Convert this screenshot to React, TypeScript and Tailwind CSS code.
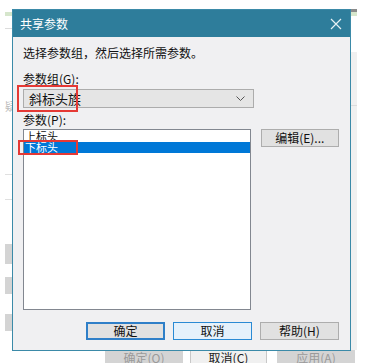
const font = { fontFamily: '"Noto Sans CJK SC", "Microsoft YaHei", sans-serif' };

// window that sits behind the dialog; only its edges show
function BackWindow() {
  return (
    <div className="absolute left-[5px] top-[9px] flex h-[370px] w-[352px] flex-col">
      <div className="ml-[7px] h-[3px] bg-[#8a8a8a]" />
      <div className="h-[4px] bg-[#d6e6cc]" />
      <div className="flex h-[334px] justify-between">
        <div className="flex w-[7px] flex-col">
          <div className="mt-[12px] h-px bg-[#dcdcdc]" />
          <div className="mt-[72px] text-[11px] leading-none text-[#bbb]">疑</div>
          <div className="mt-[62px] h-px bg-[#e0e0e0]" />
          <div className="mt-[24px] h-px bg-[#e0e0e0]" />
          <div className="mt-[44px] h-[20px] bg-[#d4d4d4]" />
          <div className="mt-[13px] h-[17px] bg-[#d4d4d4]" />
          <div className="mt-[20px] h-[17px] bg-[#d4d4d4]" />
        </div>
        <div className="mt-[36px] flex w-[7px] flex-col bg-[#f0f0f0]">
          <div className="mt-[53px] h-px bg-[#dcdcdc]" />
        </div>
      </div>
      <div className="flex items-start pl-[100px] text-[12px] leading-[16px]">
        <div className="flex h-[20px] w-[78px] justify-center bg-[#d4d4d4] text-[#9a9a9a]">确定(O)</div>
        <div className="ml-[7px] flex h-[20px] w-[77px] justify-center border-x border-[#c8c8c8] bg-[#f0f0f0] text-[#222]">取消(C)</div>
        <div className="ml-[10px] flex h-[20px] w-[78px] justify-center bg-[#d4d4d4] text-[#9a9a9a]">应用(A)</div>
      </div>
    </div>
  );
}

function Btn({ label, kind, className }: { label: string; kind?: "default" | "hover"; className?: string }) {
  const look =
    kind === "default"
      ? "border-2 border-[#2f7fc8] bg-[#e1e1e1]"
      : kind === "hover"
        ? "border border-[#2a8ad4] bg-[#e5f1fb]"
        : "border border-[#adadad] bg-[#e1e1e1]";
  return (
    <div className={`flex h-[18px] w-[79px] items-center justify-center text-[12px] leading-none text-[#111] ${look} ${className ?? ""}`}>
      {label}
    </div>
  );
}

export default function App() {
  return (
    <div className="relative h-[363px] w-[380px] overflow-hidden bg-white" style={font}>
      <BackWindow />

      <div className="absolute left-[12px] top-[9px] flex h-[342px] w-[339px] flex-col border border-[#3b8aa8] bg-[#f0f0f2]">
        <div className="flex h-[27px] shrink-0 items-center justify-between bg-[#2e7d9b] pl-[7px] pr-[7px] text-white">
          <span className="text-[12px] leading-none">共享参数</span>
          <svg width="12" height="12" viewBox="0 0 12 12" className="mr-[1px]">
            <path d="M1 1 L11 11 M11 1 L1 11" stroke="#e6f0f4" strokeWidth="1.2" />
          </svg>
        </div>

        <div className="flex flex-1 flex-col pl-[10px] pr-[11px] text-[12px] leading-none text-[#111]">
          <div className="mt-[10px]">选择参数组，然后选择所需参数。</div>

          <div className="mt-[14px]">参数组(G):</div>
          <div className="relative mt-[4px]">
            <div className="flex h-[19px] w-[231px] items-center justify-between border border-[#acacac] bg-[#e5e5e5] pl-[5px] pr-[8px]">
              <span className="text-[13px]">斜标头族</span>
              <svg width="9" height="6" viewBox="0 0 9 6">
                <path d="M0.5 0.5 L4.5 4.5 L8.5 0.5" fill="none" stroke="#555" strokeWidth="1" />
              </svg>
            </div>
            <div className="absolute -left-[6px] -top-[4px] h-[27px] w-[61px] border-2 border-[#e53935]" />
          </div>

          <div className="mt-[6px]">参数(P):</div>
          <div className="mt-[3px] flex gap-[10px]">
            <div className="relative flex h-[181px] w-[229px] flex-col border border-[#828790] bg-white pt-px text-[11px] leading-[11px]">
              <div className="h-[11px] pl-px">上标头</div>
              <div className="h-[11px] bg-[#0078d7] pl-px text-white">下标头</div>
              <div className="absolute -left-[6px] top-[10px] h-[15px] w-[60px] border-2 border-[#e53935]" />
            </div>
            <Btn label="编辑(E)..." className="w-[78px]" />
          </div>

          <div className="mt-[12px] flex justify-end gap-[8px]">
            <Btn label="确定" kind="default" />
            <Btn label="取消" kind="hover" />
            <Btn label="帮助(H)" className="w-[78px]" />
          </div>
        </div>
      </div>
    </div>
  );
}
